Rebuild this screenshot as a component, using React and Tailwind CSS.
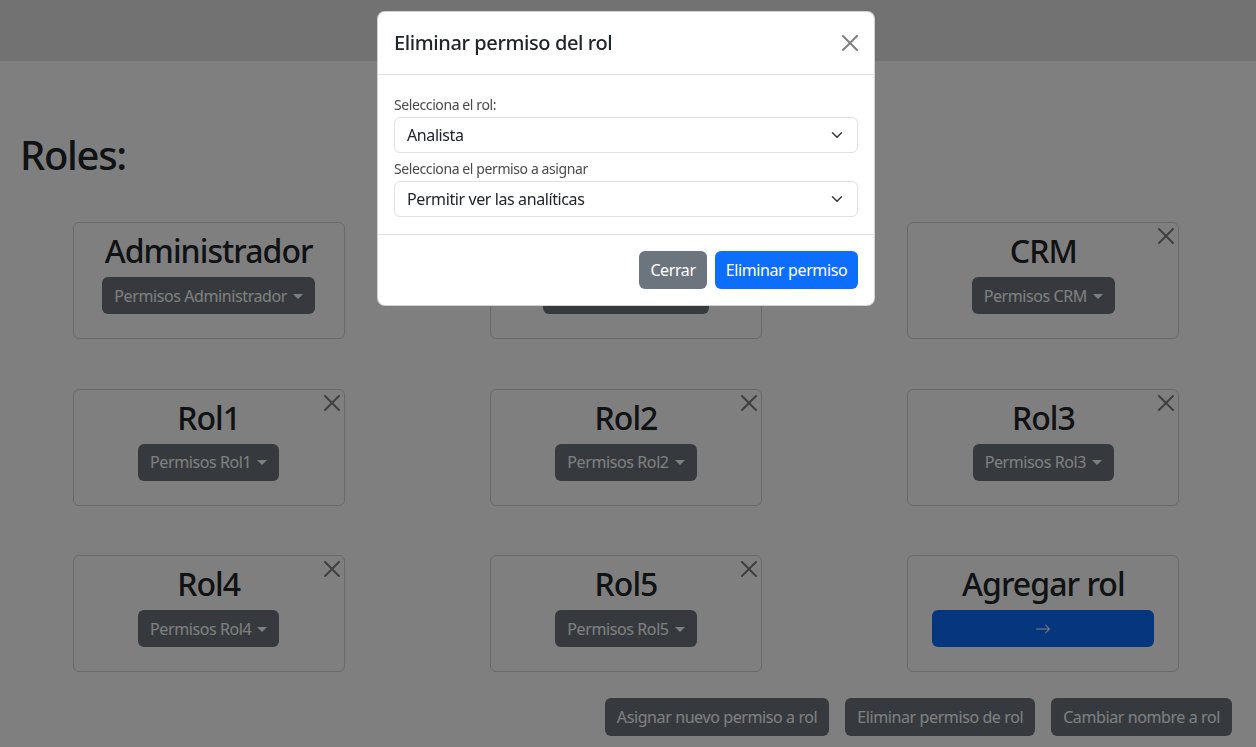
import React from 'react';

const CloseIcon = ({ className }) => (
  <svg viewBox="0 0 16 16" className={className} fill="currentColor">
    <path d="M.293.293a1 1 0 0 1 1.414 0L8 6.586 14.293.293a1 1 0 1 1 1.414 1.414L9.414 8l6.293 6.293a1 1 0 0 1-1.414 1.414L8 9.414l-6.293 6.293a1 1 0 0 1-1.414-1.414L6.586 8 .293 1.707a1 1 0 0 1 0-1.414z" />
  </svg>
);

const Chevron = () => (
  <svg viewBox="0 0 16 16" className="w-4 h-3" fill="none" stroke="#343a40" strokeWidth="2" strokeLinecap="round" strokeLinejoin="round">
    <path d="m2 5 6 6 6-6" />
  </svg>
);

const ArrowRight = () => (
  <svg viewBox="0 0 16 16" className="w-4 h-4" fill="currentColor">
    <path fillRule="evenodd" d="M1 8a.5.5 0 0 1 .5-.5h11.793l-3.147-3.146a.5.5 0 0 1 .708-.708l4 4a.5.5 0 0 1 0 .708l-4 4a.5.5 0 0 1-.708-.708L13.293 8.5H1.5A.5.5 0 0 1 1 8" />
  </svg>
);

const roles = [
  { name: 'Administrador', close: false },
  { name: 'Analista', close: true },
  { name: 'CRM', close: true },
  { name: 'Rol1', close: true },
  { name: 'Rol2', close: true },
  { name: 'Rol3', close: true },
  { name: 'Rol4', close: true },
  { name: 'Rol5', close: true },
];

const RoleCard = ({ name, close }) => (
  <div className="relative justify-self-center w-[272px] h-[117px] rounded-md border border-black/[.175] pt-[9px] text-center">
    <h2 className="text-[32px] font-medium leading-[38px] tracking-[-0.03em]">{name}</h2>
    <button className="mt-[7px] h-[37px] inline-flex items-center rounded-md bg-[#6c757d] px-3 text-base text-white">
      Permisos {name}
      <span className="ml-[6px] mt-[1px] border-t-[5px] border-x-[5px] border-t-white border-x-transparent"></span>
    </button>
    {close && <CloseIcon className="absolute top-[5px] right-[4px] w-4 h-4 text-black/50" />}
  </div>
);

const App = () => {
  return (
    <div className="relative min-h-screen bg-white text-[#212529] tracking-[-0.025em] font-['Noto_Sans','Open_Sans',sans-serif]">
      {/* Navbar */}
      <nav className="h-[61px] bg-[#e5e5e7]"></nav>

      <main>
        <h1 className="pl-5 pt-[70px] text-[40px] font-medium leading-[48px] tracking-[-0.033em]">Roles:</h1>

        <div className="mt-[43px] grid grid-cols-3 gap-y-[49.5px] pr-1">
          {roles.map((r) => (
            <RoleCard key={r.name} {...r} />
          ))}
          <div className="justify-self-center w-[272px] h-[117px] rounded-md border border-black/[.175] pt-[9px] flex flex-col items-center">
            <h2 className="text-[32px] font-medium leading-[38px] tracking-[-0.03em]">Agregar rol</h2>
            <button className="mt-[7px] h-[37px] w-[222px] flex items-center justify-center rounded-md bg-[#0d6efd] text-white">
              <ArrowRight />
            </button>
          </div>
        </div>

        <div className="mt-[26px] flex justify-end gap-4 pr-6">
          <button className="h-[38px] rounded-md bg-[#6c757d] px-3 text-base text-white">Asignar nuevo permiso a rol</button>
          <button className="h-[38px] rounded-md bg-[#6c757d] px-3 text-base text-white">Eliminar permiso de rol</button>
          <button className="h-[38px] rounded-md bg-[#6c757d] px-3 text-base text-white">Cambiar nombre a rol</button>
        </div>
      </main>

      {/* Backdrop */}
      <div className="fixed inset-0 bg-black/50"></div>

      {/* Modal */}
      <div className="fixed inset-x-0 top-[11px] flex justify-center pr-1">
        <div className="w-[498px] rounded-lg border border-black/[.175] bg-white">
          <div className="flex items-center justify-between border-b border-[#dee2e6] px-4 py-4">
            <h5 className="text-[20px] font-medium leading-[30px]">Eliminar permiso del rol</h5>
            <CloseIcon className="w-4 h-4 text-black/50" />
          </div>

          <div className="px-4 pt-[19px] pb-[17px]">
            <label className="block text-[14px] leading-[21px] text-[#4a4a4a] mb-[2px]">Selecciona el rol:</label>
            <div className="flex h-[36px] items-center justify-between rounded-md border border-[#dee2e6] pl-3 pr-3 text-base">
              <span>Analista</span>
              <Chevron />
            </div>
            <label className="mt-[5px] block text-[14px] leading-[21px] text-[#4a4a4a] mb-[2px]">Selecciona el permiso a asignar</label>
            <div className="flex h-[36px] items-center justify-between rounded-md border border-[#dee2e6] pl-3 pr-3 text-base">
              <span>Permitir ver las analíticas</span>
              <Chevron />
            </div>
          </div>

          <div className="flex items-center justify-end gap-2 border-t border-[#dee2e6] px-4 py-4">
            <button className="h-[38px] w-[68px] rounded-md bg-[#6c757d] text-base text-white">Cerrar</button>
            <button className="h-[38px] w-[143px] rounded-md bg-[#0d6efd] text-base text-white">Eliminar permiso</button>
          </div>
        </div>
      </div>
    </div>
  );
};

export default App;
